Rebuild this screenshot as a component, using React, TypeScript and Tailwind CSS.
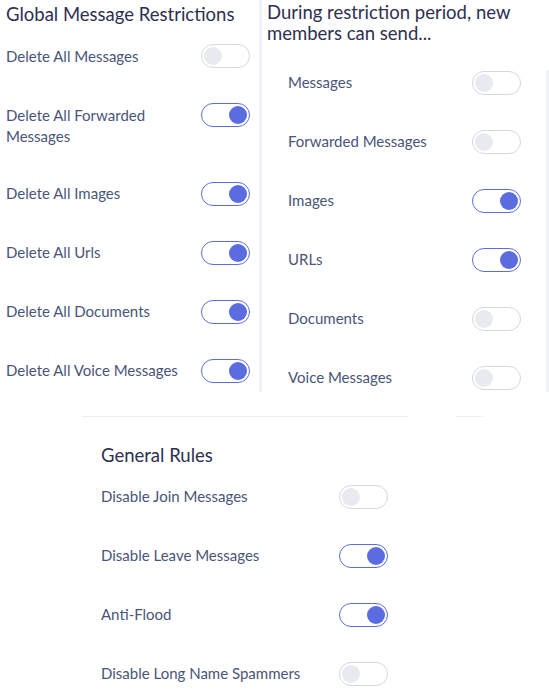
import { useState } from 'react'

type Rule = { label: string; on: boolean }

const globalRules: Rule[] = [
  { label: 'Delete All Messages', on: false },
  { label: 'Delete All Forwarded Messages', on: true },
  { label: 'Delete All Images', on: true },
  { label: 'Delete All Urls', on: true },
  { label: 'Delete All Documents', on: true },
  { label: 'Delete All Voice Messages', on: true },
]

const newMemberRules: Rule[] = [
  { label: 'Messages', on: false },
  { label: 'Forwarded Messages', on: false },
  { label: 'Images', on: true },
  { label: 'URLs', on: true },
  { label: 'Documents', on: false },
  { label: 'Voice Messages', on: false },
]

const generalRules: Rule[] = [
  { label: 'Disable Join Messages', on: false },
  { label: 'Disable Leave Messages', on: true },
  { label: 'Anti-Flood', on: true },
  { label: 'Disable Long Name Spammers', on: false },
]

function Toggle({ initial }: { initial: boolean }) {
  const [on, setOn] = useState(initial)
  return (
    <button
      type="button"
      onClick={() => setOn(!on)}
      className={`shrink-0 w-[49px] h-[24px] rounded-full border-[1.5px] bg-white flex items-center px-[2px] ${
        on ? 'border-[#5b6ee1] justify-end' : 'border-[#d3d7de] justify-start'
      }`}
    >
      <span className={`block w-[18px] h-[18px] rounded-full ${on ? 'bg-[#5a6ce0]' : 'bg-[#e7eaee]'}`} />
    </button>
  )
}

function RuleRow({ rule }: { rule: Rule }) {
  return (
    <div className="flex items-start justify-between gap-4">
      <span className="pt-[1.5px] text-[15px] leading-[21px] text-[#4a5578]">{rule.label}</span>
      <Toggle initial={rule.on} />
    </div>
  )
}

export default function App() {
  return (
    <div className="w-[549px] h-[692px] bg-white overflow-hidden" style={{ fontFamily: 'Lato, "Open Sans", sans-serif' }}>
      <div className="flex">
        {/* Global restrictions */}
        <div className="w-[259px] shrink-0 pl-[6px] pr-[9px] pb-[9px]">
          <h2 className="pt-[2px] text-[18.5px] leading-[24px] text-[#2e3050]">Global Message Restrictions</h2>
          <div className="mt-[18px] flex flex-col gap-[35px]">
            {globalRules.map((r) => (
              <RuleRow key={r.label} rule={r} />
            ))}
          </div>
        </div>

        {/* New members */}
        <div className="flex-1 border-l-[3px] border-[#f0f2f7] flex flex-col">
          <h2 className="pl-[5px] pt-[1.5px] text-[18.5px] leading-[21px] text-[#2e3050]">
            During restriction period, new
            <br />
            members can send...
          </h2>
          <div className="mt-[26px] flex-1 border-r-[3px] border-[#f0f2f7] pl-[26px] pr-[25px] pt-px flex flex-col gap-[35px]">
            {newMemberRules.map((r) => (
              <RuleRow key={r.label} rule={r} />
            ))}
          </div>
        </div>
      </div>

      {/* Divider */}
      <div className="mt-[24px] ml-[82px] flex">
        <div className="w-[326px] h-px bg-[#eceef2]" />
        <div className="w-[48px]" />
        <div className="w-[27px] h-px bg-[#eceef2]" />
      </div>

      {/* General rules */}
      <div className="ml-[101px] w-[287px] mt-[26px]">
        <h2 className="text-[18.5px] leading-[24px] text-[#2e3050]">General Rules</h2>
        <div className="mt-[18px] flex flex-col gap-[35px]">
          {generalRules.map((r) => (
            <RuleRow key={r.label} rule={r} />
          ))}
        </div>
      </div>
    </div>
  )
}
